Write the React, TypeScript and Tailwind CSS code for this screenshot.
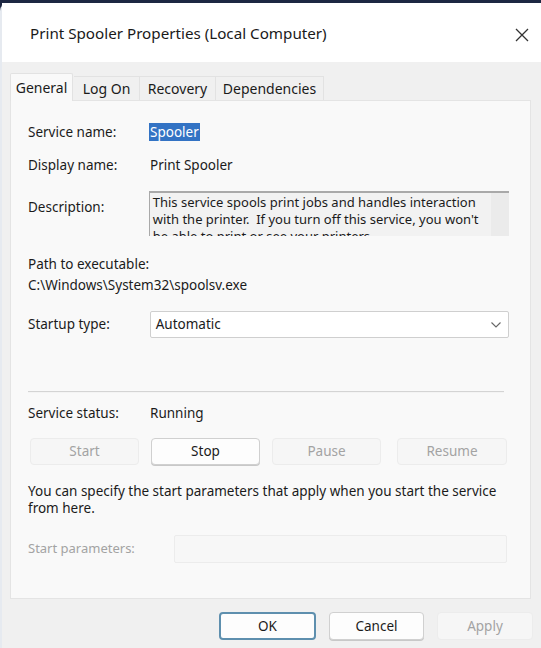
import React from "react";

const font = { fontFamily: '"Noto Sans", "Liberation Sans", sans-serif' };

function Btn({
  label,
  disabled,
  className = "",
}: {
  label: string;
  disabled?: boolean;
  className?: string;
}) {
  return (
    <div
      className={`flex items-center justify-center h-[27px] rounded-[4px] border text-[13.5px] ${
        disabled
          ? "border-[#ececec] bg-[#f6f6f6] text-[#a3a3a3]"
          : "border-[#d0d0d0] bg-[#fdfdfd] text-[#1b1b1b] shadow-[0_1px_0_#c8c8c8]"
      } ${className}`}
    >
      {label}
    </div>
  );
}

export default function App() {
  return (
    <div
      className="w-[541px] h-[648px] bg-[#1d2742] pt-[3px] overflow-hidden"
      style={font}
    >
      <div className="h-full rounded-tl-[8px] bg-[#f0f0f0] flex flex-col border-l-[2px] border-[#e6eaf0]">
        {/* title bar */}
        <div className="h-[59px] bg-white flex items-center justify-between pl-[28px] pr-[11px] shrink-0">
          <span className="text-[15.2px] text-[#1a1a1a] pt-[2px]">
            Print Spooler Properties (Local Computer)
          </span>
          <svg width="16" height="16" viewBox="0 0 16 16" className="mt-[4px]">
            <path d="M2 2 L14 14 M14 2 L2 14" stroke="#333" strokeWidth="1.3" />
          </svg>
        </div>

        {/* tabs */}
        <div className="flex items-end pl-[8px] pt-[11px] text-[14px] text-[#1b1b1b]">
          <div className="h-[28px] w-[63px] flex items-center justify-center bg-[#f9f9f9] border border-b-0 border-[#e2e2e2] rounded-t-[2px] z-10 -mb-px">
            General
          </div>
          <div className="h-[24px] w-[66px] ml-[1px] flex items-center justify-center border border-b-0 border-l-0 border-[#e2e2e2]">
            Log On
          </div>
          <div className="h-[24px] w-[76px] flex items-center justify-center border border-b-0 border-l-0 border-[#e2e2e2]">
            Recovery
          </div>
          <div className="h-[24px] w-[108px] flex items-center justify-center border border-b-0 border-l-0 border-[#e2e2e2]">
            Dependencies
          </div>
        </div>

        {/* panel */}
        <div className="ml-[8px] w-[521px] h-[499px] bg-[#f9f9f9] border border-[#e4e4e4] pl-[17px] pr-[21px] text-[13.5px] text-[#1b1b1b] shrink-0">
          <div className="flex items-center h-[18px] mt-[22px]">
            <span className="w-[121px]">Service name:</span>
            <span className="bg-[#3373c4] text-white px-[1px] leading-[18px]">Spooler</span>
          </div>
          <div className="flex items-center h-[18px] mt-[15px]">
            <span className="w-[122px]">Display name:</span>
            <span>Print Spooler</span>
          </div>
          <div className="flex items-start mt-[17px]">
            <span className="w-[121px] mt-[6px]">Description:</span>
            <div className="relative h-[45px] w-[361px] bg-[#f2f2f2] border-t-2 border-l border-[#a9a9a9] overflow-hidden pl-[3px] pr-[15px] pt-[1px] text-[13px] leading-[17px]">
              This service spools print jobs and handles interaction with the
              printer.&nbsp; If you turn off this service, you won't be able to
              print or see your printers.
              <div className="absolute right-0 top-0 bottom-0 w-[18px] bg-[#ebebeb]" />
            </div>
          </div>
          <div className="h-[18px] mt-[19px] flex items-center">Path to executable:</div>
          <div className="h-[18px] mt-[3px] flex items-center">
            C:\Windows\System32\spoolsv.exe
          </div>
          <div className="flex items-center mt-[17px]">
            <span className="w-[122px]">Startup type:</span>
            <div className="h-[27px] w-[360px] bg-white border border-[#cfcfcf] rounded-[2px] flex items-center justify-between pl-[5px] pr-[6px]">
              <span>Automatic</span>
              <svg width="12" height="8" viewBox="0 0 12 8">
                <path d="M1.5 1.5 L6 6 L10.5 1.5" fill="none" stroke="#666" strokeWidth="1.1" />
              </svg>
            </div>
          </div>
          <div className="mt-[53px] mr-[5px] h-[2px] bg-[#d4d4d4] border-b border-[#f4f4f4]" />
          <div className="flex items-center h-[18px] mt-[11px]">
            <span className="w-[122px]">Service status:</span>
            <span>Running</span>
          </div>
          <div className="flex mt-[16px] pl-[2px]">
            <Btn label="Start" disabled className="w-[109px]" />
            <Btn label="Stop" className="w-[109px] ml-[12px]" />
            <Btn label="Pause" disabled className="w-[109px] ml-[12px]" />
            <Btn label="Resume" disabled className="w-[110px] ml-[16px]" />
          </div>
          <div className="mt-[18px] leading-[17px]">
            You can specify the start parameters that apply when you start the
            service
            <br />
            from here.
          </div>
          <div className="flex items-center mt-[18px]">
            <span className="w-[146px] text-[#a3a3a3] text-[13px]">Start parameters:</span>
            <div className="h-[28px] w-[333px] bg-[#f7f7f7] border border-[#ececec] rounded-[2px]" />
          </div>
        </div>

        {/* footer buttons */}
        <div className="flex justify-end pr-[8px] mt-[13px]">
          <div className="flex items-center justify-center h-[28px] w-[97px] rounded-[4px] border-2 border-[#5e8fae] bg-[#fdfdfd] text-[13.5px] text-[#1b1b1b]">
            OK
          </div>
          <Btn label="Cancel" className="w-[95px] h-[28px] ml-[13px]" />
          <Btn label="Apply" disabled className="w-[96px] h-[28px] ml-[13px]" />
        </div>
      </div>
    </div>
  );
}
